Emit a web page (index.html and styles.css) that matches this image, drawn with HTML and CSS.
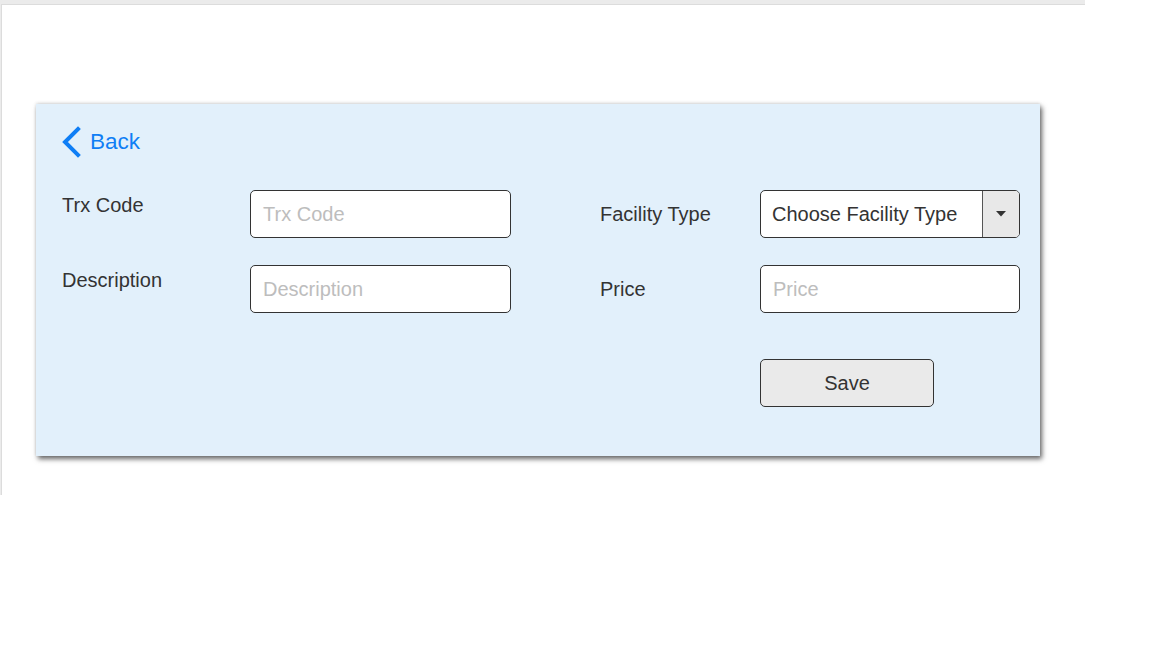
FILE: index.html
```html
<!DOCTYPE html>
<html>
<head>
<meta charset="utf-8">
<link rel="stylesheet" href="styles.css">
</head>
<body>
<div class="frame">
  <div class="card">
    <a class="back" href="#">
      <svg class="chev" width="20" height="32" viewBox="0 0 20 32"><polyline points="16,3 3,16 16,29" fill="none" stroke="#0f7ef5" stroke-width="4" stroke-linecap="square"/></svg>
      <span>Back</span>
    </a>
    <div class="form">
      <div class="col">
        <div class="row">
          <label class="lbl lbl-top">Trx Code</label>
          <div class="field"><span class="ph">Trx Code</span></div>
        </div>
        <div class="row">
          <label class="lbl lbl-top">Description</label>
          <div class="field"><span class="ph">Description</span></div>
        </div>
      </div>
      <div class="col col-right">
        <div class="row">
          <label class="lbl">Facility Type</label>
          <div class="field select"><span class="val">Choose Facility Type</span><span class="arrow"><svg width="10" height="6" viewBox="0 0 10 6"><polygon points="0,0 10,0 5,5.5" fill="#333"/></svg></span></div>
        </div>
        <div class="row">
          <label class="lbl">Price</label>
          <div class="field"><span class="ph">Price</span></div>
        </div>
        <div class="row row-btn">
          <span class="lbl"></span>
          <button class="save">Save</button>
        </div>
      </div>
    </div>
  </div>
</div>
</body>
</html>
```
FILE: styles.css
```css
html, body {
  margin: 0;
  padding: 0;
  background: #fff;
  font-family: "Liberation Sans", Arial, sans-serif;
}
.frame {
  width: 1085px;
  height: 495px;
  box-sizing: border-box;
  border-top: 4px solid #ebebeb;
  border-left: 1px solid #ebebeb;
  box-shadow: inset 1px 1px 0 #dcdcdc;
  padding: 100px 0 0 35px;
}
.card {
  width: 1004px;
  height: 352px;
  box-sizing: border-box;
  background: #e2f0fb;
  box-shadow: 2px 3px 5px rgba(0,0,0,0.6), 0 -1px 3px rgba(0,0,0,0.12);
  padding: 22px 20px 0 26px;
}
.back {
  display: flex;
  align-items: center;
  gap: 8px;
  text-decoration: none;
  color: #0f7ef5;
  font-size: 22.5px;
  height: 32px;
}
.chev { flex: none; }
.form {
  display: flex;
  margin-top: 32px;
}
.col {
  display: flex;
  flex-direction: column;
  gap: 27px;
  width: 538px;
}
.col-right { width: 420px; }
.row {
  display: flex;
  align-items: center;
}
.lbl {
  color: #333;
  font-size: 20px;
  width: 188px;
  flex: none;
}
.col-right .lbl { width: 160px; }
.lbl-top {
  align-self: flex-start;
  padding-top: 4px;
}
.field {
  width: 261px;
  height: 48px;
  box-sizing: border-box;
  border: 1.5px solid #333;
  border-radius: 5px;
  background: #fff;
  display: flex;
  align-items: center;
  padding-left: 12px;
  font-size: 20px;
}
.col-right .field { width: 260px; }
.ph { color: #bdbdbd; }
.select {
  padding-left: 0;
  overflow: hidden;
}
.val {
  color: #333;
  flex: 1;
  padding-left: 11px;
}
.arrow {
  width: 36px;
  height: 100%;
  background: #e8e8e8;
  border-left: 1px solid #555;
  display: flex;
  align-items: center;
  justify-content: center;
  flex: none;
}
.row-btn { margin-top: 19px; }
.save {
  width: 174px;
  height: 48px;
  box-sizing: border-box;
  border: 1.5px solid #333;
  border-radius: 5px;
  background: #eaeaea;
  color: #333;
  font-family: "Liberation Sans", Arial, sans-serif;
  font-size: 20px;
  padding: 0;
}
```
